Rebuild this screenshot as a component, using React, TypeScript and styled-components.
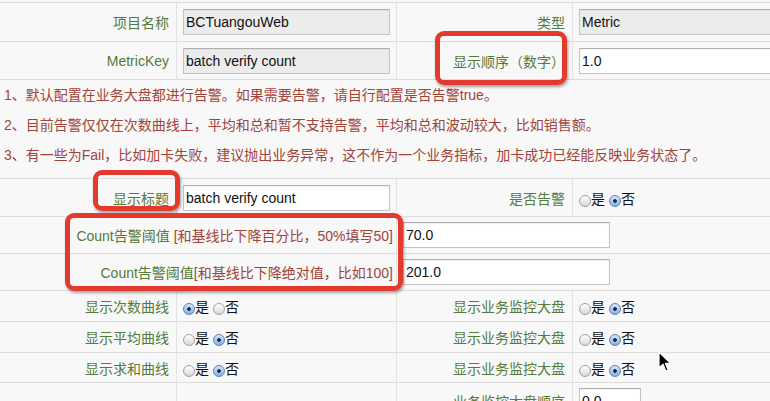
import React from "react";
import styled, { createGlobalStyle } from "styled-components";

const Global = createGlobalStyle`
  html, body { margin: 0; padding: 0; background: #f8f8f8; overflow: hidden; }
  body { font-family: "Liberation Sans", "Noto Sans CJK SC", sans-serif; font-size: 14px; }
`;

const Page = styled.div`
  position: relative;
  width: 770px;
  height: 401px;
  overflow: hidden;
  padding-top: 2px;
  box-sizing: border-box;
`;

const Row = styled.div<{ $cols: string; $h: number }>`
  display: grid;
  grid-template-columns: ${(p) => p.$cols};
  height: ${(p) => p.$h}px;
  border-top: 1px solid #dcdcdc;
  box-sizing: border-box;
`;

const Cell = styled.div<{ $first?: boolean }>`
  display: flex;
  align-items: center;
  padding: 0 6px;
  border-left: ${(p) => (p.$first ? "none" : "1px solid #e3e3e3")};
  min-width: 0;
  white-space: nowrap;
  overflow: visible;
`;

const Label = styled(Cell)<{ $pad?: number }>`
  justify-content: flex-end;
  color: #557a3c;
  padding-right: ${(p) => p.$pad ?? 7}px;
`;

const Hint = styled.span`
  color: #a0443a;
`;

const Field = styled.input<{ $w?: number; $disabled?: boolean }>`
  width: ${(p) => p.$w ?? 207}px;
  height: 26px;
  box-sizing: border-box;
  border: 1px solid #c4c4c4;
  border-top-color: #b0b0b0;
  box-shadow: inset 0 1px 1px rgba(0, 0, 0, 0.06);
  background: ${(p) => (p.$disabled ? "#ececec" : "#fff")};
  padding: 0 2px;
  font-family: "Liberation Sans", "Noto Sans CJK SC", sans-serif;
  font-size: 14px;
  color: #111;
  outline: none;
  flex-shrink: 0;
`;

const Notes = styled.div`
  border-top: 1px solid #dcdcdc;
  height: 99px;
  box-sizing: border-box;
  padding: 0 4px;
  color: #a0443a;
  line-height: 30px;
  white-space: nowrap;
`;

const Options = styled.div`
  display: flex;
  align-items: center;
  gap: 4px;
`;

const Option = styled.span`
  display: inline-flex;
  align-items: center;
  color: #111;
`;

const Radio = styled.span<{ $on?: boolean }>`
  width: 12px;
  height: 12px;
  border-radius: 50%;
  box-sizing: border-box;
  margin-top: 6px;
  border: 1px solid ${(p) => (p.$on ? "#5f82b4" : "#a0a0a0")};
  background: ${(p) =>
    p.$on
      ? "radial-gradient(circle, #1b2c50 0 1.5px, transparent 2.2px), linear-gradient(#d6e6f8, #86b2e6)"
      : "linear-gradient(#ffffff, #d8d8d8)"};
`;

const Callout = styled.div<{ $x: number; $y: number; $w: number; $h: number }>`
  position: absolute;
  left: ${(p) => p.$x}px;
  top: ${(p) => p.$y}px;
  width: ${(p) => p.$w}px;
  height: ${(p) => p.$h}px;
  border: 5px solid #e23a2f;
  border-radius: 9px;
  box-sizing: border-box;
  box-shadow: 1px 2px 3px rgba(0, 0, 0, 0.35);
  pointer-events: none;
`;

const Pointer = styled.svg`
  position: absolute;
  left: 658px;
  top: 351px;
`;

const YesNo = ({ yes }: { yes: boolean }) => (
  <Options>
    <Option>
      <Radio $on={yes} />是
    </Option>
    <Option>
      <Radio $on={!yes} />否
    </Option>
  </Options>
);

const FOUR = "176px 220px 176px 1fr";
const TWO = "396px 1fr";

export default function App() {
  return (
    <>
      <Global />
      <Page>
        <Row $cols={FOUR} $h={39}>
          <Label $first>项目名称</Label>
          <Cell>
            <Field $disabled readOnly defaultValue="BCTuangouWeb" />
          </Cell>
          <Label>类型</Label>
          <Cell>
            <Field $disabled readOnly defaultValue="Metric" />
          </Cell>
        </Row>
        <Row $cols={FOUR} $h={38}>
          <Label $first>MetricKey</Label>
          <Cell>
            <Field $disabled readOnly defaultValue="batch verify count" />
          </Cell>
          <Label>显示顺序（数字）</Label>
          <Cell>
            <Field readOnly defaultValue="1.0" />
          </Cell>
        </Row>
        <Notes>
          <div>1、默认配置在业务大盘都进行告警。如果需要告警，请自行配置是否告警true。</div>
          <div>2、目前告警仅仅在次数曲线上，平均和总和暂不支持告警，平均和总和波动较大，比如销售额。</div>
          <div>3、有一些为Fail，比如加卡失败，建议抛出业务异常，这不作为一个业务指标，加卡成功已经能反映业务状态了。</div>
        </Notes>
        <Row $cols={FOUR} $h={38}>
          <Label $first>显示标题</Label>
          <Cell>
            <Field readOnly defaultValue="batch verify count" />
          </Cell>
          <Label>是否告警</Label>
          <Cell>
            <YesNo yes={false} />
          </Cell>
        </Row>
        <Row $cols={TWO} $h={37}>
          <Label $first $pad={3}>
            Count告警阈值&nbsp;<Hint>[和基线比下降百分比，50%填写50]</Hint>
          </Label>
          <Cell>
            <Field readOnly defaultValue="70.0" />
          </Cell>
        </Row>
        <Row $cols={TWO} $h={37}>
          <Label $first $pad={3}>
            Count告警阈值<Hint>[和基线比下降绝对值，比如100]</Hint>
          </Label>
          <Cell>
            <Field readOnly defaultValue="201.0" />
          </Cell>
        </Row>
        <Row $cols={FOUR} $h={31}>
          <Label $first>显示次数曲线</Label>
          <Cell>
            <YesNo yes={true} />
          </Cell>
          <Label>显示业务监控大盘</Label>
          <Cell>
            <YesNo yes={false} />
          </Cell>
        </Row>
        <Row $cols={FOUR} $h={31}>
          <Label $first>显示平均曲线</Label>
          <Cell>
            <YesNo yes={false} />
          </Cell>
          <Label>显示业务监控大盘</Label>
          <Cell>
            <YesNo yes={false} />
          </Cell>
        </Row>
        <Row $cols={FOUR} $h={30}>
          <Label $first>显示求和曲线</Label>
          <Cell>
            <YesNo yes={false} />
          </Cell>
          <Label>显示业务监控大盘</Label>
          <Cell>
            <YesNo yes={false} />
          </Cell>
        </Row>
        <Row $cols={FOUR} $h={36}>
          <Label $first />
          <Cell />
          <Label>业务监控大盘顺序</Label>
          <Cell>
            <Field $w={62} readOnly defaultValue="0.0" />
          </Cell>
        </Row>

        <Callout $x={435} $y={31} $w={132} $h={54} />
        <Callout $x={93} $y={170} $w={87} $h={41} />
        <Callout $x={65} $y={213} $w={338} $h={78} />

        <Pointer width="14" height="22" viewBox="0 0 14 22">
          <path
            d="M1 1 L1 17 L5 13.2 L7.8 20 L10.2 19 L7.4 12.4 L12.6 12.4 Z"
            fill="#000"
            stroke="#fff"
            strokeWidth="1.2"
            strokeLinejoin="round"
          />
        </Pointer>
      </Page>
    </>
  );
}
